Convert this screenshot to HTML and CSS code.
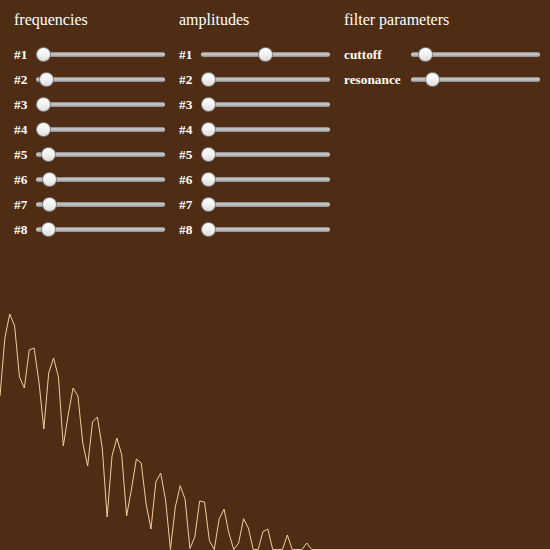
FILE: index.html
```html
<!DOCTYPE html>
<html>
<head>
<meta charset="utf-8">
<link rel="stylesheet" href="styles.css">
</head>
<body>
<div class="controls">
  <section class="group">
    <h2 class="title">frequencies</h2>
    <div class="rows narrow">
      <label class="lbl">#1</label><input class="slider" type="range" min="0" max="100" value="0">
      <label class="lbl">#2</label><input class="slider" type="range" min="0" max="100" value="3">
      <label class="lbl">#3</label><input class="slider" type="range" min="0" max="100" value="0">
      <label class="lbl">#4</label><input class="slider" type="range" min="0" max="100" value="0">
      <label class="lbl">#5</label><input class="slider" type="range" min="0" max="100" value="4">
      <label class="lbl">#6</label><input class="slider" type="range" min="0" max="100" value="5">
      <label class="lbl">#7</label><input class="slider" type="range" min="0" max="100" value="5">
      <label class="lbl">#8</label><input class="slider" type="range" min="0" max="100" value="4">
    </div>
  </section>
  <section class="group">
    <h2 class="title">amplitudes</h2>
    <div class="rows narrow">
      <label class="lbl">#1</label><input class="slider" type="range" min="0" max="100" value="50">
      <label class="lbl">#2</label><input class="slider" type="range" min="0" max="100" value="0">
      <label class="lbl">#3</label><input class="slider" type="range" min="0" max="100" value="0">
      <label class="lbl">#4</label><input class="slider" type="range" min="0" max="100" value="0">
      <label class="lbl">#5</label><input class="slider" type="range" min="0" max="100" value="0">
      <label class="lbl">#6</label><input class="slider" type="range" min="0" max="100" value="0">
      <label class="lbl">#7</label><input class="slider" type="range" min="0" max="100" value="0">
      <label class="lbl">#8</label><input class="slider" type="range" min="0" max="100" value="0">
    </div>
  </section>
  <section class="group wide-group">
    <h2 class="title">filter parameters</h2>
    <div class="rows wide">
      <label class="lbl">cuttoff</label><input class="slider" type="range" min="0" max="100" value="6">
      <label class="lbl">resonance</label><input class="slider" type="range" min="0" max="100" value="12">
    </div>
  </section>
</div>
<svg class="scope" width="550" height="300" viewBox="0 250 550 300">
  <polyline class="wave" points="0,396 4.87,338 9.74,314 14.61,326 19.48,377 24.35,388 29.22,350 34.09,348 38.96,382 43.83,429 48.7,373 53.57,358 58.44,377 63.31,446 68.18,415 73.05,388 77.92,396 82.79,443 87.66,466 92.53,422 97.4,417 102.27,448 107.14,517 112.01,456 116.88,438 121.75,455 126.62,516 131.49,489 136.36,459 141.23,463 146.1,504 150.97,529 155.84,482 160.71,473 165.58,500 170.45,549.5 175.32,507 180.19,485.7 185.06,499 189.93,548.5 194.8,537 199.67,501 204.54,502 209.41,540.7 214.28,549.5 219.15,519 224.02,509 228.89,533 233.76,549.5 238.63,543 243.5,518.7 248.37,528 253.24,549.5 258.11,549.5 262.98,531.7 267.85,529 272.72,549.5 277.59,549.5 282.46,549.5 287.33,535 292.2,549.5 297.07,549.5 301.94,549.5 306.81,543 311.68,549.5 550,549.5"/>
</svg>
</body>
</html>
```

FILE: styles.css
```css
html, body {
  margin: 0;
  padding: 0;
  background: #4e2d14;
  overflow: hidden;
}
body {
  width: 550px;
  height: 550px;
  font-family: "Liberation Serif", "Times New Roman", serif;
  color: #ffffff;
}
.controls {
  display: flex;
  gap: 14px;
  padding: 11px 0 0 14px;
  height: 231px;
}
.group {
  width: 151px;
}
.wide-group {
  width: 196px;
}
.title {
  margin: 0 0 13px 0;
  font-size: 16px;
  line-height: 18px;
  font-weight: normal;
}
.rows {
  display: grid;
  grid-auto-rows: 25px;
  align-items: center;
}
.narrow {
  grid-template-columns: 22px 129px;
}
.wide {
  grid-template-columns: 67px 129px;
}
.lbl {
  font-size: 13.33px;
  font-weight: bold;
  line-height: 15px;
  white-space: nowrap;
}
.slider {
  -webkit-appearance: none;
  appearance: none;
  width: 129px;
  height: 15px;
  margin: 0;
  padding: 0;
  background: transparent;
}
.slider::-webkit-slider-runnable-track {
  height: 5px;
  border-radius: 3px;
  background: linear-gradient(#7f7f7f 0%, #c9c9c9 35%, #bdbdbd 60%, #8c8c8c 100%);
}
.slider::-webkit-slider-thumb {
  -webkit-appearance: none;
  appearance: none;
  width: 15px;
  height: 15px;
  margin-top: -5px;
  border-radius: 50%;
  box-sizing: border-box;
  border: 1px solid #7d7d7d;
  background: linear-gradient(#ffffff 0%, #f2f2f2 50%, #dcdcdc 100%);
}
.scope {
  display: block;
  margin-top: 8px;
}
.wave {
  fill: none;
  stroke: #f3cc9e;
  stroke-width: 1;
}
```
